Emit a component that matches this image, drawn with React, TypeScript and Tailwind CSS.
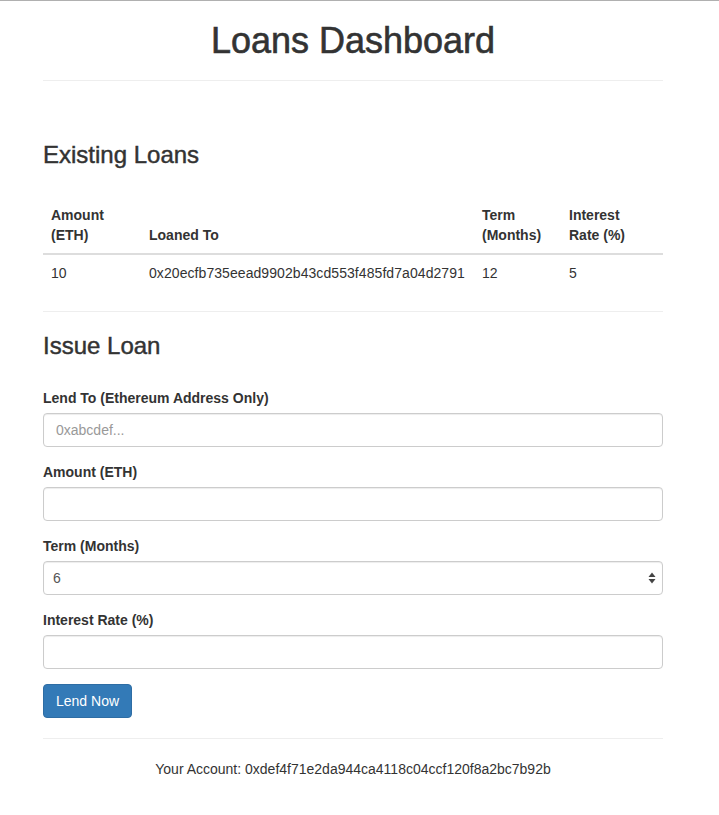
import React, { useState } from "react";

type Loan = {
  amount: string;
  to: string;
  term: string;
  rate: string;
};

const loans: Loan[] = [
  {
    amount: "10",
    to: "0x20ecfb735eead9902b43cd553f485fd7a04d2791",
    term: "12",
    rate: "5",
  },
];

const inputClass =
  "block w-full h-[34px] px-3 text-[14px] text-[#555] bg-white border border-[#ccc] rounded-[4px] shadow-[inset_0_1px_1px_rgba(0,0,0,0.075)] outline-none placeholder:text-[#999]";

const headingClass = "text-[24px] leading-[26px] font-normal [-webkit-text-stroke:0.45px_#333]";

function Field({ label, children }: { label: string; children: React.ReactNode }) {
  return (
    <div className="mb-[15px]">
      <label className="block mb-[5px] font-bold leading-5">{label}</label>
      {children}
    </div>
  );
}

export default function App() {
  const [lendTo, setLendTo] = useState("");
  const [amount, setAmount] = useState("");
  const [term, setTerm] = useState("6");
  const [rate, setRate] = useState("");

  return (
    <div className="min-h-[815px] bg-white border-t border-[#b0b0b0] text-[14px] leading-5 text-[#333] font-['Liberation_Sans',Arial,sans-serif]">
      <div className="ml-[43px] w-[620px]">
        <h1 className="mt-5 text-center text-[36px] leading-[40px] font-normal [-webkit-text-stroke:0.6px_#333]">
          Loans Dashboard
        </h1>
        <hr className="mt-[19px] border-0 border-t border-[#eee]" />

        <h3 className={"mt-[61px] " + headingClass}>Existing Loans</h3>
        <table className="mt-[29px] w-full table-fixed border-collapse">
          <thead>
            <tr className="text-left">
              <th className="w-[98px] px-2 py-2 align-bottom border-b-2 border-[#ddd]">
                Amount
                <br />
                (ETH)
              </th>
              <th className="w-[333px] px-2 py-2 align-bottom border-b-2 border-[#ddd]">
                Loaned To
              </th>
              <th className="w-[87px] px-2 py-2 align-bottom border-b-2 border-[#ddd]">
                Term
                <br />
                (Months)
              </th>
              <th className="px-2 py-2 align-bottom border-b-2 border-[#ddd]">
                Interest
                <br />
                Rate (%)
              </th>
            </tr>
          </thead>
          <tbody>
            {loans.map((loan) => (
              <tr key={loan.to}>
                <td className="px-2 py-2">{loan.amount}</td>
                <td className="px-2 py-2 tracking-[0.07px]">{loan.to}</td>
                <td className="px-2 py-2">{loan.term}</td>
                <td className="px-2 py-2">{loan.rate}</td>
              </tr>
            ))}
          </tbody>
        </table>
        <hr className="mt-5 border-0 border-t border-[#eee]" />

        <h3 className={"mt-[21px] " + headingClass}>Issue Loan</h3>
        <form className="mt-[29px]" onSubmit={(e) => e.preventDefault()}>
          <Field label="Lend To (Ethereum Address Only)">
            <input
              className={inputClass}
              placeholder="0xabcdef..."
              value={lendTo}
              onChange={(e) => setLendTo(e.target.value)}
            />
          </Field>
          <Field label="Amount (ETH)">
            <input className={inputClass} value={amount} onChange={(e) => setAmount(e.target.value)} />
          </Field>
          <Field label="Term (Months)">
            <div className="relative">
              <select
                className={inputClass + " appearance-none pl-[9px] text-[#333]"}
                value={term}
                onChange={(e) => setTerm(e.target.value)}
              >
                {["6", "12", "24", "36"].map((t) => (
                  <option key={t} value={t}>
                    {t}
                  </option>
                ))}
              </select>
              <svg
                className="absolute right-[7px] top-[11px] pointer-events-none"
                width="8"
                height="12"
                viewBox="0 0 8 12"
              >
                <path d="M4 0.5 L7.5 5 H0.5 Z" fill="#444" />
                <path d="M4 11.5 L7.5 7 H0.5 Z" fill="#444" />
              </svg>
            </div>
          </Field>
          <Field label="Interest Rate (%)">
            <input className={inputClass} value={rate} onChange={(e) => setRate(e.target.value)} />
          </Field>
          <button
            type="submit"
            className="h-[34px] px-3 text-[14px] text-white bg-[#337ab7] border border-[#2e6da4] rounded-[4px]"
          >
            Lend Now
          </button>
        </form>

        <hr className="mt-5 border-0 border-t border-[#eee]" />
        <p className="mt-5 text-center">
          Your Account: 0xdef4f71e2da944ca4118c04ccf120f8a2bc7b92b
        </p>
      </div>
    </div>
  );
}
